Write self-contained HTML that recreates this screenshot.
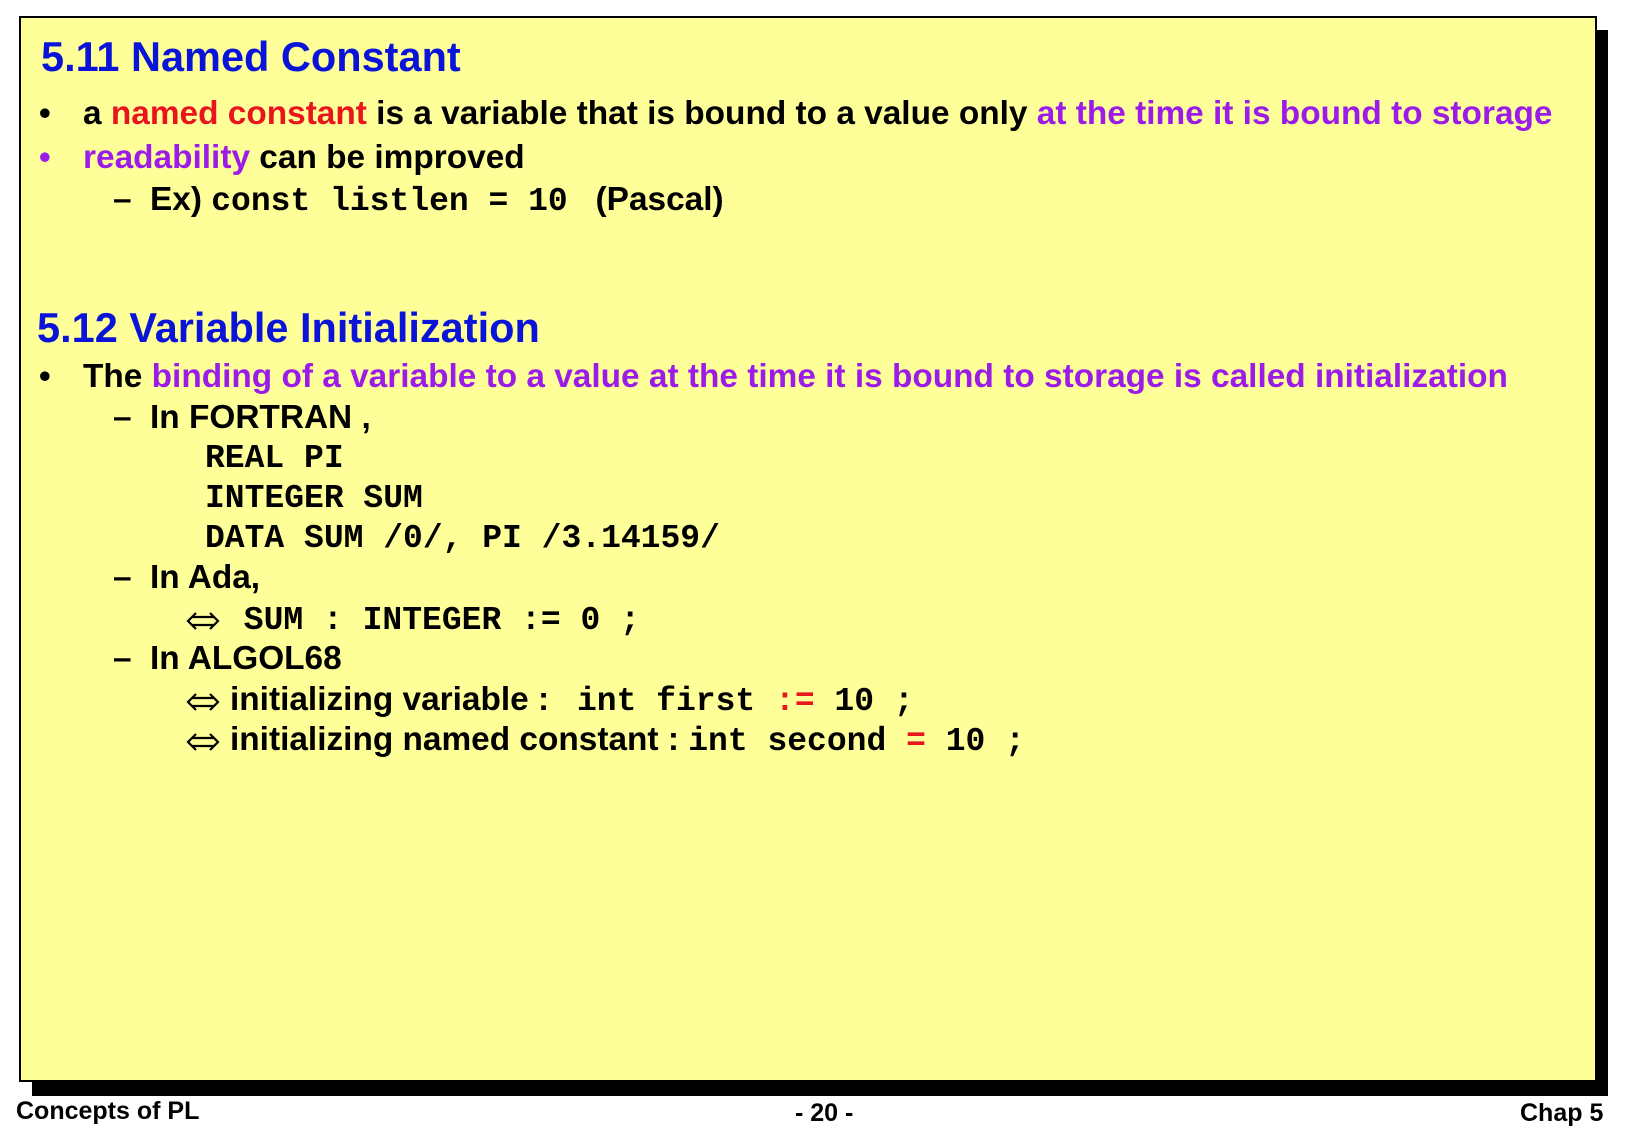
<!DOCTYPE html>
<html><head><meta charset="utf-8"><style>
body{margin:0;width:1625px;height:1125px;background:#fff;position:relative;overflow:hidden;font-family:"Liberation Sans",Arial,sans-serif;font-weight:bold}
.shadow{position:absolute;left:32px;top:30px;width:1576px;height:1066px;background:#000}
.box{position:absolute;left:19px;top:16px;width:1578px;height:1066px;background:#ffff99;border:2px solid #000;box-sizing:border-box}
.l{position:absolute;height:40px;line-height:40px;white-space:nowrap;font-size:33.4px;color:#000}
.h{font-size:41.5px;color:#0a14d8;height:50px;line-height:50px}
.m{font-family:"Liberation Mono","Courier New",monospace;font-size:33px;font-weight:bold}
.r{color:#e8141e}.p{color:#9b1ce8}
.a{display:inline-block;width:34px;height:20px;vertical-align:-2px;margin-right:4px}
.b{margin-right:10px}
.f{position:absolute;font-size:25px;height:30px;line-height:30px}
</style></head><body>
<div class="shadow"></div><div class="box"></div>
<div class="l h" style="left:41px;top:32px">5.11 Named Constant</div>
<div class="l" style="left:39px;top:94px">•</div>
<div class="l" style="left:83px;top:94px">a <span class="r">named constant</span> is a variable that is bound to a value only <span class="p">at the time it is bound to storage</span></div>
<div class="l p" style="left:39px;top:138px">•</div>
<div class="l" style="left:83px;top:138px"><span class="p">readability</span> can be improved</div>
<div class="l" style="left:113px;top:180px">–</div>
<div class="l" style="left:150px;top:180px">Ex) <span class="m">const listlen = 10</span>&nbsp;&nbsp; (Pascal)</div>
<div class="l h" style="left:37px;top:303px">5.12 Variable Initialization</div>
<div class="l" style="left:39px;top:357px">•</div>
<div class="l" style="left:83px;top:357px">The <span class="p">binding of a variable to a value at the time it is bound to storage is called initialization</span></div>
<div class="l" style="left:113px;top:398px">–</div>
<div class="l" style="left:150px;top:398px">In FORTRAN ,</div>
<div class="l m" style="left:205px;top:439px">REAL PI</div>
<div class="l m" style="left:205px;top:479px">INTEGER SUM</div>
<div class="l m" style="left:205px;top:519px">DATA SUM /0/, PI /3.14159/</div>
<div class="l" style="left:113px;top:558px">–</div>
<div class="l" style="left:150px;top:558px">In Ada,</div>
<div class="l" style="left:186px;top:599px"><svg class="a" viewBox="0 0 34 20"><path d="M10 2 L2 10 L10 18 M24 2 L32 10 L24 18 M6 6 H28 M6 14 H28" fill="none" stroke="#000" stroke-width="2.2"/></svg><span class="m">&nbsp;SUM : INTEGER := 0 ;</span></div>
<div class="l" style="left:113px;top:639px">–</div>
<div class="l" style="left:150px;top:639px">In ALGOL68</div>
<div class="l" style="left:186px;top:680px"><svg class="a b" viewBox="0 0 34 20"><path d="M10 2 L2 10 L10 18 M24 2 L32 10 L24 18 M6 6 H28 M6 14 H28" fill="none" stroke="#000" stroke-width="2.2"/></svg>initializing variable :&nbsp;&nbsp; <span class="m">int first <span class="r">:=</span> 10 ;</span></div>
<div class="l" style="left:186px;top:720px"><svg class="a b" viewBox="0 0 34 20"><path d="M10 2 L2 10 L10 18 M24 2 L32 10 L24 18 M6 6 H28 M6 14 H28" fill="none" stroke="#000" stroke-width="2.2"/></svg>initializing named constant : <span class="m">int second <span class="r">=</span> 10 ;</span></div>
<div class="f" style="left:16px;top:1096px">Concepts of PL</div>
<div class="f" style="left:795px;top:1098px">- 20 -</div>
<div class="f" style="left:1520px;top:1098px">Chap 5</div>
</body></html>
